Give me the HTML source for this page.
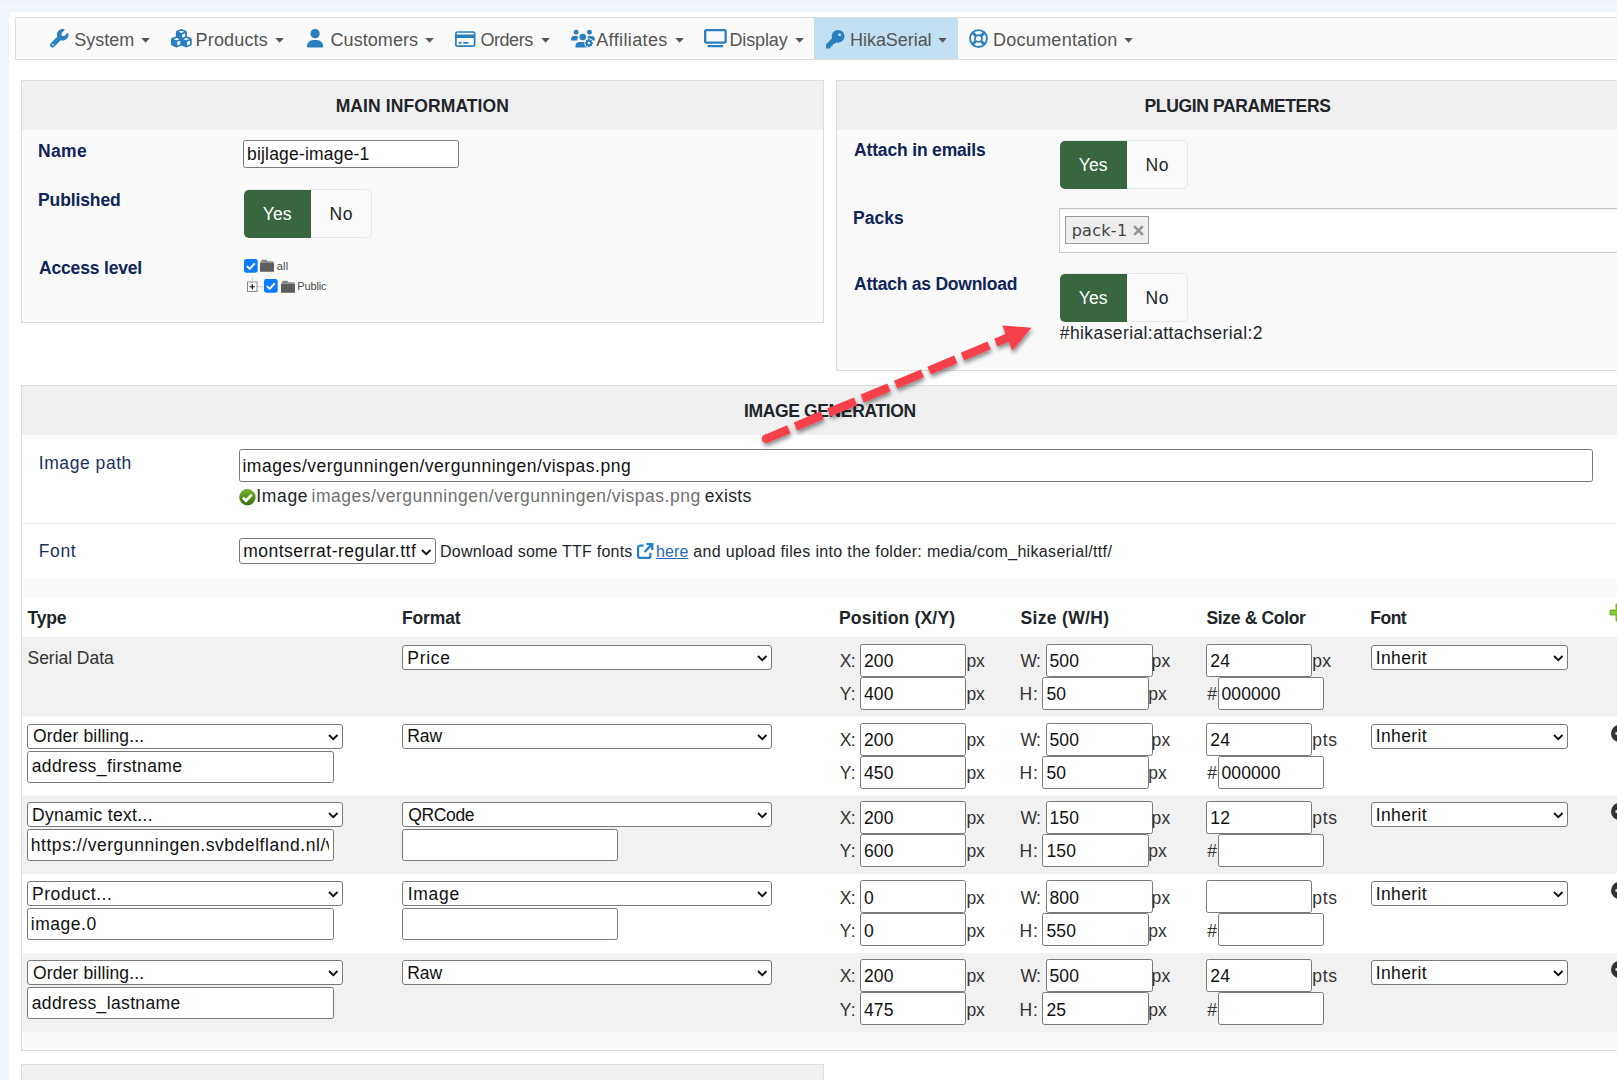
<!DOCTYPE html>
<html lang="en"><head><meta charset="utf-8"><title>HikaSerial - Plugin</title>
<style>
html,body{margin:0;padding:0}
body{width:1617px;height:1080px;overflow:hidden;background:#f0f4fc;font-family:"Liberation Sans",sans-serif;position:relative}
.b{position:absolute;box-sizing:border-box}
.t{position:absolute;white-space:pre;line-height:1;margin:0;padding:0}
.inp{background:#fff;border:1px solid #7a7a7a;border-radius:2.5px}
.sel{background:#fff;border:1px solid #7a7a7a;border-radius:3px}
svg{position:absolute;overflow:visible}
.g{display:contents}
</style></head><body>

<div class="g" aria-label="page">
<div class="b" style="left:0px;top:0px;width:1617px;height:4px;background:#eef2fa"></div>
<div class="b" style="left:9px;top:12px;width:1620px;height:1080px;background:#fff"></div>
</div>
<nav class="g" aria-label="Main menu">
<div class="b" style="left:15px;top:17px;width:1625px;height:43px;background:#fafafa;border:1px solid #ddd"></div>
<div class="b" style="left:814px;top:18px;width:144px;height:41px;background:#c2e0f2"></div>
<svg style="left:141.1px;top:38px" width="9.200" height="4.700" viewBox="0 0 9 5"><path d="M0 0h9L4.500 5z" fill="#555"/></svg>
<svg style="left:274.9px;top:38px" width="9.200" height="4.700" viewBox="0 0 9 5"><path d="M0 0h9L4.500 5z" fill="#555"/></svg>
<svg style="left:425.2px;top:38px" width="9.200" height="4.700" viewBox="0 0 9 5"><path d="M0 0h9L4.500 5z" fill="#555"/></svg>
<svg style="left:540.7px;top:38px" width="9.200" height="4.700" viewBox="0 0 9 5"><path d="M0 0h9L4.500 5z" fill="#555"/></svg>
<svg style="left:674.8px;top:38px" width="9.200" height="4.700" viewBox="0 0 9 5"><path d="M0 0h9L4.500 5z" fill="#555"/></svg>
<svg style="left:794.9px;top:38px" width="9.200" height="4.700" viewBox="0 0 9 5"><path d="M0 0h9L4.500 5z" fill="#555"/></svg>
<svg style="left:937.9px;top:38px" width="9.200" height="4.700" viewBox="0 0 9 5"><path d="M0 0h9L4.500 5z" fill="#555"/></svg>
<svg style="left:1123.7px;top:38px" width="9.200" height="4.700" viewBox="0 0 9 5"><path d="M0 0h9L4.500 5z" fill="#555"/></svg>
<svg style="left:50px;top:29.4px" width="18.5" height="18.5" viewBox="0 0 512 512"><path d="M352 320c88.400 0 160-71.600 160-160c0-15.300-2.200-30.100-6.200-44.200c-3.100-10.800-16.400-13.200-24.300-5.300l-76.800 76.800c-3 3-7.100 4.700-11.300 4.700H336c-8.800 0-16-7.200-16-16V118.600c0-4.200 1.700-8.300 4.700-11.300l76.800-76.800c7.900-7.900 5.400-21.200-5.300-24.300C382.100 2.200 367.300 0 352 0C263.600 0 192 71.600 192 160c0 19.100 3.400 37.500 9.500 54.500L19.900 396.100C7.200 408.800 0 426.100 0 444.100C0 481.600 30.400 512 67.900 512c18 0 35.300-7.200 48-19.900L297.500 310.500c17 6.200 35.400 9.500 54.500 9.500zM80 408a24 24 0 1 1 0 48 24 24 0 1 1 0-48z" fill="#2a7fc0" fill-rule="evenodd"/></svg>
<svg style="left:170.7px;top:29.3px" width="20.8" height="18.5" viewBox="0 0 576 512"><path d="M290.800 48.600l78.400 29.700L288 109.500 206.800 78.300l78.400-29.700c1.800-.7 3.800-.7 5.700 0zM136 92.500V204.700c-1.300 .4-2.600 .8-3.900 1.300l-96 36.400C14.400 250.600 0 271.500 0 294.700V413.900c0 22.200 13.100 42.300 33.500 51.300l96 42.200c14.400 6.300 30.700 6.300 45.100 0L288 457.500l113.500 49.900c14.400 6.300 30.700 6.300 45.100 0l96-42.200c20.300-8.900 33.500-29.100 33.500-51.300V294.700c0-23.300-14.400-44.100-36.100-52.400l-96-36.400c-1.300-.5-2.600-.9-3.900-1.300V92.500c0-23.300-14.400-44.100-36.100-52.400l-96-36.400c-12.800-4.800-26.900-4.800-39.700 0l-96 36.400C150.400 48.400 136 69.300 136 92.500zM392 210.600l-82.400 31.200V152.600L392 121v89.600zM154.800 250.900l78.400 29.700L152 311.700 70.800 280.600l78.400-29.700c1.800-.7 3.800-.7 5.700 0zm18.800 204.400V354.800L256 323.200v95.900l-82.400 36.200zM421.200 250.900c1.800-.7 3.800-.7 5.700 0l78.400 29.700L424 311.700l-81.200-31.100 78.400-29.700zM523.200 421.200l-77.600 34.100V354.800L528 323.200v90.700c0 3.200-1.900 6-4.800 7.300z" fill="#2a7fc0" fill-rule="evenodd"/></svg>
<svg style="left:307.2px;top:29.4px" width="16.2" height="18.5" viewBox="0 0 448 512"><path d="M224 256A128 128 0 1 0 224 0a128 128 0 1 0 0 256zm-45.700 48C79.800 304 0 383.800 0 482.300C0 498.700 13.300 512 29.700 512H418.300c16.400 0 29.700-13.300 29.700-29.700C448 383.800 368.200 304 269.700 304H178.300z" fill="#2a7fc0" /></svg>
<svg style="left:454.8px;top:29.7px" width="20.5" height="18.2" viewBox="0 0 576 512"><path d="M512 80c8.800 0 16 7.200 16 16v32H48V96c0-8.800 7.200-16 16-16H512zm16 144V416c0 8.800-7.200 16-16 16H64c-8.800 0-16-7.200-16-16V224H528zM64 32C28.700 32 0 60.700 0 96V416c0 35.300 28.700 64 64 64H512c35.300 0 64-28.700 64-64V96c0-35.300-28.700-64-64-64H64zm56 304c-13.300 0-24 10.700-24 24s10.700 24 24 24h48c13.300 0 24-10.700 24-24s-10.700-24-24-24H120zm128 0c-13.300 0-24 10.700-24 24s10.700 24 24 24H360c13.300 0 24-10.700 24-24s-10.700-24-24-24H248z" fill="#2a7fc0" fill-rule="evenodd"/></svg>
<svg style="left:570.500px;top:29px" width="22.500" height="19" viewBox="0 0 45 38"><g fill="#2a7fc0">
<circle cx="10.200" cy="6.400" r="4.900"/><circle cx="36.900" cy="6.400" r="4.900"/><circle cx="23.600" cy="16" r="6.600"/>
<path d="M0.200 22.800v-3c0-3.500 2.500-6 6-6h4c2 0 3.800.8 5 2.200-2 1.800-3 4-3 6.800z"/>
<path d="M32.600 16c1.200-1.400 3-2.200 5-2.200h4c3.500 0 6 2.500 6 6v3H35.500c0-2.800-1-5-2.900-6.800z"/>
<path d="M9 36.800v-3.500c0-4 3.200-7.300 7.300-7.300h14.600c4 0 7.300 3.300 7.300 7.300v3.500z"/>
<circle cx="35.800" cy="28.200" r="9.400" fill="#fafafa"/>
<g transform="translate(35.800 28.200)"><circle r="5.800"/><rect x="-1.900" y="-8" width="3.800" height="5" rx=".5" transform="rotate(0)"/><rect x="-1.900" y="-8" width="3.800" height="5" rx=".5" transform="rotate(45)"/><rect x="-1.900" y="-8" width="3.800" height="5" rx=".5" transform="rotate(90)"/><rect x="-1.900" y="-8" width="3.800" height="5" rx=".5" transform="rotate(135)"/><rect x="-1.900" y="-8" width="3.800" height="5" rx=".5" transform="rotate(180)"/><rect x="-1.900" y="-8" width="3.800" height="5" rx=".5" transform="rotate(225)"/><rect x="-1.900" y="-8" width="3.800" height="5" rx=".5" transform="rotate(270)"/><rect x="-1.900" y="-8" width="3.800" height="5" rx=".5" transform="rotate(315)"/><circle r="2.500" fill="#fafafa"/></g>
</g></svg>
<svg style="left:704.3px;top:29.4px" width="22.8" height="18.3" viewBox="0 0 640 512"><path d="M64 64V352H576V64H64zM0 64C0 28.700 28.700 0 64 0H576c35.300 0 64 28.700 64 64V352c0 35.300-28.700 64-64 64H64c-35.300 0-64-28.700-64-64V64zM128 448H512c17.700 0 32 14.300 32 32s-14.300 32-32 32H128c-17.700 0-32-14.300-32-32s14.300-32 32-32z" fill="#2a7fc0" fill-rule="evenodd"/></svg>
<svg style="left:826px;top:29.9px" width="18.5" height="18.5" viewBox="0 0 512 512"><path d="M336 352c97.200 0 176-78.800 176-176S433.200 0 336 0S160 78.800 160 176c0 18.700 2.900 36.800 8.300 53.700L7 391c-4.500 4.500-7 10.600-7 17v80c0 13.300 10.700 24 24 24h80c13.300 0 24-10.700 24-24V448h40c13.300 0 24-10.700 24-24V384h40c6.400 0 12.500-2.500 17-7l33.300-33.300c16.900 5.400 35 8.300 53.700 8.300zM376 96a40 40 0 1 1 0 80 40 40 0 1 1 0-80z" fill="#2a7fc0" fill-rule="evenodd"/></svg>
<svg style="left:968.8px;top:29.200px" width="19" height="19" viewBox="0 0 38 38"><g fill="none" stroke="#2a7fc0">
<circle cx="19" cy="19" r="16.900" stroke-width="3.700"/><circle cx="19" cy="19" r="6.900" stroke-width="3.600"/>
<path d="M7.500 7.500l6.500 6.500M30.500 7.500L24 14M7.500 30.500L14 24M30.500 30.500L24 24" stroke-width="5.600"/></g>
<g fill="none" stroke="#fafafa" stroke-width="0"></g></svg>
<span class="t" style="left:74.30px;top:31px;font-size:18px;font-weight:400;color:#555;letter-spacing:-0.024px;">System</span>
<span class="t" style="left:195.60px;top:31px;font-size:18px;font-weight:400;color:#555;letter-spacing:0.152px;">Products</span>
<span class="t" style="left:330.50px;top:31px;font-size:18px;font-weight:400;color:#555;letter-spacing:0.060px;">Customers</span>
<span class="t" style="left:480.50px;top:31px;font-size:18px;font-weight:400;color:#555;letter-spacing:-0.462px;">Orders</span>
<span class="t" style="left:596.20px;top:31px;font-size:18px;font-weight:400;color:#555;letter-spacing:0.378px;">Affiliates</span>
<span class="t" style="left:729.50px;top:31px;font-size:18px;font-weight:400;color:#555;letter-spacing:-0.136px;">Display</span>
<span class="t" style="left:850.10px;top:31px;font-size:18px;font-weight:400;color:#555;letter-spacing:-0.059px;">HikaSerial</span>
<span class="t" style="left:993.10px;top:31px;font-size:18px;font-weight:400;color:#555;letter-spacing:0.253px;">Documentation</span>
</nav>
<section class="g" aria-label="Main information">
<div class="b" style="left:21px;top:80px;width:803px;height:243px;border:1px solid #ddd;background:#fafafa"></div>
<div class="b" style="left:22px;top:81px;width:801px;height:49px;background:#f0f0f0"></div>
<div class="b inp" style="left:243px;top:140px;width:216px;height:28px;"></div>
<div class="b" style="left:244px;top:189px;width:128px;height:49px;background:#fbfbfb;border:1px solid #e5e8ed;border-radius:5px"></div>
<div class="b" style="left:244px;top:190px;width:67px;height:47.5px;background:#386641;border-radius:5px 0 0 5px"></div>
<svg style="left:243.6px;top:258.5px" width="13.7" height="13.7" viewBox="0 0 14 14"><rect x="0" y="0" width="14" height="14" rx="2.200" fill="#0d7bfd"/><path d="M3 7.300l2.800 2.800L11 4.400" fill="none" stroke="#fff" stroke-width="2"/></svg>
<svg style="left:260.2px;top:259.3px" width="14" height="13" viewBox="0 0 14 13"><path d="M0.500 2.500L2 .8h4.500l1 1.400H13.500v1.500H0.500z" fill="#8a8a8a"/><rect x="0" y="3.800" width="14" height="9" rx=".4" fill="#5e5e5e"/></svg>
<svg style="left:246px;top:274px" width="20" height="20" viewBox="0 0 20 20"><path d="M6.500 3.500v4" stroke="#aaa" stroke-width="1" stroke-dasharray="1 1" fill="none"/><path d="M11.500 12.750h6" stroke="#ccc" stroke-width="1" fill="none"/><rect x="1.500" y="8" width="9.500" height="9.500" fill="#fff" stroke="#888" stroke-width="1"/><path d="M3.800 12.750h5M6.300 10.250v5" stroke="#000" stroke-width="1.200"/></svg>
<svg style="left:264px;top:279.3px" width="13.7" height="13.7" viewBox="0 0 14 14"><rect x="0" y="0" width="14" height="14" rx="2.200" fill="#0d7bfd"/><path d="M3 7.300l2.800 2.800L11 4.400" fill="none" stroke="#fff" stroke-width="2"/></svg>
<svg style="left:281.2px;top:280.2px" width="14" height="13" viewBox="0 0 14 13"><path d="M0.500 2.500L2 .8h4.500l1 1.400H13.500v1.500H0.500z" fill="#8a8a8a"/><rect x="0" y="3.800" width="14" height="9" rx=".4" fill="#5e5e5e"/></svg>
<span class="t" style="left:335.70px;top:98px;font-size:17.5px;font-weight:700;color:#212529;letter-spacing:0.100px;">MAIN INFORMATION</span>
<span class="t" style="left:38.00px;top:143px;font-size:17.5px;font-weight:700;color:#0f2458;letter-spacing:0.356px;">Name</span>
<span class="t" style="left:38.00px;top:192px;font-size:17.5px;font-weight:700;color:#0f2458;letter-spacing:-0.116px;">Published</span>
<span class="t" style="left:39.00px;top:260px;font-size:17.5px;font-weight:700;color:#0f2458;letter-spacing:-0.175px;">Access level</span>
<span class="t" style="left:247.00px;top:146px;font-size:17.5px;font-weight:400;color:#111;letter-spacing:0.192px;">bijlage-image-1</span>
<span class="t" style="left:262.80px;top:206px;font-size:17.5px;font-weight:400;color:#fff;letter-spacing:0.051px;">Yes</span>
<span class="t" style="left:329.38px;top:206px;font-size:17.5px;font-weight:400;color:#212529;letter-spacing:0.700px;">No</span>
<span class="t" style="left:276.80px;top:261px;font-size:11px;font-weight:400;color:#4a4a4a;letter-spacing:0.169px;">all</span>
<span class="t" style="left:297.20px;top:281px;font-size:11px;font-weight:400;color:#4a4a4a;letter-spacing:-0.112px;">Public</span>
</section>
<section class="g" aria-label="Plugin parameters">
<div class="b" style="left:836px;top:80px;width:803px;height:291px;border:1px solid #ddd;background:#fafafa"></div>
<div class="b" style="left:837px;top:81px;width:801px;height:49px;background:#f0f0f0"></div>
<div class="b" style="left:1060px;top:140px;width:128px;height:49px;background:#fbfbfb;border:1px solid #e5e8ed;border-radius:5px"></div>
<div class="b" style="left:1060px;top:141px;width:67px;height:47.5px;background:#386641;border-radius:5px 0 0 5px"></div>
<div class="b" style="left:1060px;top:273px;width:128px;height:49px;background:#fbfbfb;border:1px solid #e5e8ed;border-radius:5px"></div>
<div class="b" style="left:1060px;top:274px;width:67px;height:47.5px;background:#386641;border-radius:5px 0 0 5px"></div>
<div class="b" style="left:1059px;top:208px;width:600px;height:45px;background:#fff;border:1px solid #ccc;border-top-color:#c4c4c4;box-shadow:inset 0 1px 1px rgba(0,0,0,.06)"></div>
<div class="b" style="left:1065px;top:216px;width:83.5px;height:28px;background:#eee;border:1px solid #9c9c9c"></div>
<svg style="left:1132.600px;top:225.300px" width="11" height="11" viewBox="0 0 10 10"><path d="M1 1l8 8M9 1l-8 8" stroke="#959595" stroke-width="2.300" fill="none"/></svg>
<span class="t" style="left:1144.50px;top:98px;font-size:17.5px;font-weight:700;color:#212529;letter-spacing:-0.363px;">PLUGIN PARAMETERS</span>
<span class="t" style="left:854.10px;top:142px;font-size:17.5px;font-weight:700;color:#0f2458;letter-spacing:-0.172px;">Attach in emails</span>
<span class="t" style="left:853.10px;top:210px;font-size:17.5px;font-weight:700;color:#0f2458;letter-spacing:-0.018px;">Packs</span>
<span class="t" style="left:854.10px;top:276px;font-size:17.5px;font-weight:700;color:#0f2458;letter-spacing:-0.232px;">Attach as Download</span>
<span class="t" style="left:1078.80px;top:157px;font-size:17.5px;font-weight:400;color:#fff;letter-spacing:0.051px;">Yes</span>
<span class="t" style="left:1145.38px;top:157px;font-size:17.5px;font-weight:400;color:#212529;letter-spacing:0.700px;">No</span>
<span class="t" style="left:1078.80px;top:290px;font-size:17.5px;font-weight:400;color:#fff;letter-spacing:0.051px;">Yes</span>
<span class="t" style="left:1145.38px;top:290px;font-size:17.5px;font-weight:400;color:#212529;letter-spacing:0.700px;">No</span>
<span class="t" style="left:1071.70px;top:223px;font-size:16px;font-weight:400;color:#444;font-family:'DejaVu Sans', 'Liberation Sans', sans-serif;letter-spacing:0.281px;">pack-1</span>
<span class="t" style="left:1059.80px;top:325px;font-size:17.5px;font-weight:400;color:#212529;letter-spacing:0.401px;">#hikaserial:attachserial:2</span>
</section>
<section class="g" aria-label="Image generation">
<div class="b" style="left:21px;top:385px;width:1620px;height:666px;border:1px solid #ddd;background:#fafafa"></div>
<div class="b" style="left:22px;top:386px;width:1618px;height:49px;background:#f0f0f0"></div>
<div class="b" style="left:22px;top:435px;width:1618px;height:143px;background:#fff"></div>
<div class="b" style="left:22px;top:523px;width:1618px;height:1px;background:#e9ecef"></div>
<div class="b inp" style="left:238.5px;top:449px;width:1354.5px;height:32.5px;"></div>
<svg style="left:239px;top:489px" width="16.800" height="16.400" viewBox="0 0 16 16"><defs><linearGradient id="cg" x1="0" y1="0" x2="0" y2="1"><stop offset="0" stop-color="#74b62c"/><stop offset="1" stop-color="#356f10"/></linearGradient></defs><circle cx="8" cy="8" r="8" fill="url(#cg)"/><path d="M3.600 8.600l3 2.900 5.600-6" fill="none" stroke="#fff" stroke-width="2.600"/></svg>
<div class="b sel" style="left:238.5px;top:538px;width:197px;height:26px"><svg style="right:3.500px;top:9.7px" width="10.500" height="6.500" viewBox="0 0 10.500 6.500"><path d="M1 1l4.250 4.250L9.500 1" fill="none" stroke="#111" stroke-width="1.900"/></svg></div>
<svg style="left:637.100px;top:543.300px" width="16.500" height="16" viewBox="0 0 16 15.500"><path d="M6.500 2.500H3.200C2 2.500 1 3.500 1 4.700v7.600c0 1.200 1 2.200 2.200 2.200h7.600c1.200 0 2.200-1 2.200-2.200V9.500" fill="none" stroke="#2a7fc8" stroke-width="2.200"/><path d="M9.200 1.100h5.600v5.600M14.500 1.400L7.200 8.700" fill="none" stroke="#2a7fc8" stroke-width="2.300"/></svg>
<div class="b" style="left:22px;top:597px;width:1618px;height:40px;background:#fff"></div>
<svg style="left:1610px;top:603.5px" width="17" height="17" viewBox="0 0 17 17"><path d="M6 0h5v6h6v5h-6v6H6v-6H0V6h6z" fill="#86c93a" stroke="#5a9e22" stroke-width="0.8"/></svg>
<div class="b" style="left:22px;top:637px;width:1618px;height:80px;background:#f1f1f1"></div>
<div class="b sel" style="left:402px;top:645px;width:370px;height:25px"><svg style="right:3.500px;top:9.2px" width="10.500" height="6.500" viewBox="0 0 10.500 6.500"><path d="M1 1l4.250 4.250L9.500 1" fill="none" stroke="#111" stroke-width="1.900"/></svg></div>
<div class="b inp" style="left:859.5px;top:644px;width:106.5px;height:33px"></div>
<div class="b inp" style="left:859.5px;top:677px;width:106.5px;height:33px"></div>
<div class="b inp" style="left:1045.5px;top:644px;width:107px;height:33px"></div>
<div class="b inp" style="left:1042px;top:677px;width:106.5px;height:33px"></div>
<div class="b inp" style="left:1206px;top:644px;width:106px;height:33px"></div>
<div class="b inp" style="left:1217.5px;top:677px;width:106.5px;height:33px"></div>
<div class="b sel" style="left:1370.5px;top:645px;width:197.5px;height:25px"><svg style="right:3.500px;top:9.2px" width="10.500" height="6.500" viewBox="0 0 10.500 6.500"><path d="M1 1l4.250 4.250L9.500 1" fill="none" stroke="#111" stroke-width="1.900"/></svg></div>
<div class="b" style="left:22px;top:717px;width:1618px;height:78px;background:#fff"></div>
<div class="b sel" style="left:27px;top:724px;width:316px;height:25px"><svg style="right:3.500px;top:9.2px" width="10.500" height="6.500" viewBox="0 0 10.500 6.500"><path d="M1 1l4.250 4.250L9.500 1" fill="none" stroke="#111" stroke-width="1.900"/></svg></div>
<div class="b inp" style="left:27px;top:751px;width:307px;height:32px"></div>
<div class="b sel" style="left:402px;top:724px;width:370px;height:25px"><svg style="right:3.500px;top:9.2px" width="10.500" height="6.500" viewBox="0 0 10.500 6.500"><path d="M1 1l4.250 4.250L9.500 1" fill="none" stroke="#111" stroke-width="1.900"/></svg></div>
<div class="b inp" style="left:859.5px;top:723px;width:106.5px;height:33px"></div>
<div class="b inp" style="left:859.5px;top:756px;width:106.5px;height:33px"></div>
<div class="b inp" style="left:1045.5px;top:723px;width:107px;height:33px"></div>
<div class="b inp" style="left:1042px;top:756px;width:106.5px;height:33px"></div>
<div class="b inp" style="left:1206px;top:723px;width:106px;height:33px"></div>
<div class="b inp" style="left:1217.5px;top:756px;width:106.5px;height:33px"></div>
<div class="b sel" style="left:1370.5px;top:724px;width:197.5px;height:25px"><svg style="right:3.500px;top:9.2px" width="10.500" height="6.500" viewBox="0 0 10.500 6.500"><path d="M1 1l4.250 4.250L9.500 1" fill="none" stroke="#111" stroke-width="1.900"/></svg></div>
<svg style="left:1611px;top:725.0px" width="17" height="17" viewBox="0 0 17 17"><circle cx="8.500" cy="8.500" r="8.500" fill="#333"/><path d="M4.500 8.500h8" stroke="#fff" stroke-width="2.600"/></svg>
<div class="b" style="left:22px;top:795px;width:1618px;height:79px;background:#f1f1f1"></div>
<div class="b sel" style="left:27px;top:802px;width:316px;height:25px"><svg style="right:3.500px;top:9.2px" width="10.500" height="6.500" viewBox="0 0 10.500 6.500"><path d="M1 1l4.250 4.250L9.500 1" fill="none" stroke="#111" stroke-width="1.900"/></svg></div>
<div class="b inp" style="left:27px;top:829px;width:307px;height:32px"></div>
<div class="b sel" style="left:402px;top:802px;width:370px;height:25px"><svg style="right:3.500px;top:9.2px" width="10.500" height="6.500" viewBox="0 0 10.500 6.500"><path d="M1 1l4.250 4.250L9.500 1" fill="none" stroke="#111" stroke-width="1.900"/></svg></div>
<div class="b inp" style="left:402px;top:829px;width:216px;height:32px"></div>
<div class="b inp" style="left:859.5px;top:801px;width:106.5px;height:33px"></div>
<div class="b inp" style="left:859.5px;top:834px;width:106.5px;height:33px"></div>
<div class="b inp" style="left:1045.5px;top:801px;width:107px;height:33px"></div>
<div class="b inp" style="left:1042px;top:834px;width:106.5px;height:33px"></div>
<div class="b inp" style="left:1206px;top:801px;width:106px;height:33px"></div>
<div class="b inp" style="left:1217.5px;top:834px;width:106.5px;height:33px"></div>
<div class="b sel" style="left:1370.5px;top:802px;width:197.5px;height:25px"><svg style="right:3.500px;top:9.2px" width="10.500" height="6.500" viewBox="0 0 10.500 6.500"><path d="M1 1l4.250 4.250L9.500 1" fill="none" stroke="#111" stroke-width="1.900"/></svg></div>
<svg style="left:1611px;top:803.0px" width="17" height="17" viewBox="0 0 17 17"><circle cx="8.500" cy="8.500" r="8.500" fill="#333"/><path d="M4.500 8.500h8" stroke="#fff" stroke-width="2.600"/></svg>
<div class="b" style="left:22px;top:874px;width:1618px;height:79px;background:#fff"></div>
<div class="b sel" style="left:27px;top:881px;width:316px;height:25px"><svg style="right:3.500px;top:9.2px" width="10.500" height="6.500" viewBox="0 0 10.500 6.500"><path d="M1 1l4.250 4.250L9.500 1" fill="none" stroke="#111" stroke-width="1.900"/></svg></div>
<div class="b inp" style="left:27px;top:908px;width:307px;height:32px"></div>
<div class="b sel" style="left:402px;top:881px;width:370px;height:25px"><svg style="right:3.500px;top:9.2px" width="10.500" height="6.500" viewBox="0 0 10.500 6.500"><path d="M1 1l4.250 4.250L9.500 1" fill="none" stroke="#111" stroke-width="1.900"/></svg></div>
<div class="b inp" style="left:402px;top:908px;width:216px;height:32px"></div>
<div class="b inp" style="left:859.5px;top:880px;width:106.5px;height:33px"></div>
<div class="b inp" style="left:859.5px;top:913px;width:106.5px;height:33px"></div>
<div class="b inp" style="left:1045.5px;top:880px;width:107px;height:33px"></div>
<div class="b inp" style="left:1042px;top:913px;width:106.5px;height:33px"></div>
<div class="b inp" style="left:1206px;top:880px;width:106px;height:33px"></div>
<div class="b inp" style="left:1217.5px;top:913px;width:106.5px;height:33px"></div>
<div class="b sel" style="left:1370.5px;top:881px;width:197.5px;height:25px"><svg style="right:3.500px;top:9.2px" width="10.500" height="6.500" viewBox="0 0 10.500 6.500"><path d="M1 1l4.250 4.250L9.500 1" fill="none" stroke="#111" stroke-width="1.900"/></svg></div>
<svg style="left:1611px;top:882.0px" width="17" height="17" viewBox="0 0 17 17"><circle cx="8.500" cy="8.500" r="8.500" fill="#333"/><path d="M4.500 8.500h8" stroke="#fff" stroke-width="2.600"/></svg>
<div class="b" style="left:22px;top:953px;width:1618px;height:79px;background:#f1f1f1"></div>
<div class="b sel" style="left:27px;top:960px;width:316px;height:25px"><svg style="right:3.500px;top:9.2px" width="10.500" height="6.500" viewBox="0 0 10.500 6.500"><path d="M1 1l4.250 4.250L9.500 1" fill="none" stroke="#111" stroke-width="1.900"/></svg></div>
<div class="b inp" style="left:27px;top:987px;width:307px;height:32px"></div>
<div class="b sel" style="left:402px;top:960px;width:370px;height:25px"><svg style="right:3.500px;top:9.2px" width="10.500" height="6.500" viewBox="0 0 10.500 6.500"><path d="M1 1l4.250 4.250L9.500 1" fill="none" stroke="#111" stroke-width="1.900"/></svg></div>
<div class="b inp" style="left:859.5px;top:959px;width:106.5px;height:33px"></div>
<div class="b inp" style="left:859.5px;top:992px;width:106.5px;height:33px"></div>
<div class="b inp" style="left:1045.5px;top:959px;width:107px;height:33px"></div>
<div class="b inp" style="left:1042px;top:992px;width:106.5px;height:33px"></div>
<div class="b inp" style="left:1206px;top:959px;width:106px;height:33px"></div>
<div class="b inp" style="left:1217.5px;top:992px;width:106.5px;height:33px"></div>
<div class="b sel" style="left:1370.5px;top:960px;width:197.5px;height:25px"><svg style="right:3.500px;top:9.2px" width="10.500" height="6.500" viewBox="0 0 10.500 6.500"><path d="M1 1l4.250 4.250L9.500 1" fill="none" stroke="#111" stroke-width="1.900"/></svg></div>
<svg style="left:1611px;top:961.0px" width="17" height="17" viewBox="0 0 17 17"><circle cx="8.500" cy="8.500" r="8.500" fill="#333"/><path d="M4.500 8.500h8" stroke="#fff" stroke-width="2.600"/></svg>
<span class="t" style="left:744.00px;top:403px;font-size:17.5px;font-weight:700;color:#212529;letter-spacing:-0.364px;">IMAGE GENERATION</span>
<span class="t" style="left:38.80px;top:455px;font-size:17.5px;font-weight:400;color:#1c2f5e;letter-spacing:0.553px;">Image path</span>
<span class="t" style="left:38.80px;top:543px;font-size:17.5px;font-weight:400;color:#1c2f5e;letter-spacing:0.582px;">Font</span>
<span class="t" style="left:242.40px;top:458px;font-size:17.5px;font-weight:400;color:#111;letter-spacing:0.513px;">images/vergunningen/vergunningen/vispas.png</span>
<span class="t" style="left:256.15px;top:488px;font-size:17.5px;font-weight:400;color:#212529;letter-spacing:0.700px;">Image</span>
<span class="t" style="left:311.60px;top:488px;font-size:17.5px;font-weight:400;color:#707070;letter-spacing:0.518px;">images/vergunningen/vergunningen/vispas.png</span>
<span class="t" style="left:704.80px;top:488px;font-size:17.5px;font-weight:400;color:#212529;letter-spacing:0.323px;">exists</span>
<span class="t" style="left:243.20px;top:543px;font-size:17.5px;font-weight:400;color:#111;letter-spacing:0.483px;">montserrat-regular.ttf</span>
<span class="t" style="left:440.10px;top:544px;font-size:16px;font-weight:400;color:#212529;letter-spacing:0.222px;">Download some TTF fonts</span>
<span class="t" style="left:655.90px;top:544px;font-size:16px;font-weight:400;color:#2a69b8;letter-spacing:0.125px;text-decoration:underline">here</span>
<span class="t" style="left:693.30px;top:544px;font-size:16px;font-weight:400;color:#212529;letter-spacing:0.331px;">and upload files into the folder: media/com_hikaserial/ttf/</span>
<span class="t" style="left:27.50px;top:610px;font-size:17.5px;font-weight:700;color:#212529;letter-spacing:-0.188px;">Type</span>
<span class="t" style="left:402.00px;top:610px;font-size:17.5px;font-weight:700;color:#212529;letter-spacing:-0.147px;">Format</span>
<span class="t" style="left:839.00px;top:610px;font-size:17.5px;font-weight:700;color:#212529;letter-spacing:0.179px;">Position (X/Y)</span>
<span class="t" style="left:1020.50px;top:610px;font-size:17.5px;font-weight:700;color:#212529;letter-spacing:0.336px;">Size (W/H)</span>
<span class="t" style="left:1206.50px;top:610px;font-size:17.5px;font-weight:700;color:#212529;letter-spacing:-0.342px;">Size &amp; Color</span>
<span class="t" style="left:1370.30px;top:610px;font-size:17.5px;font-weight:700;color:#212529;letter-spacing:-0.523px;">Font</span>
<span class="t" style="left:27.50px;top:650px;font-size:17.5px;font-weight:400;color:#333;letter-spacing:-0.034px;">Serial Data</span>
<span class="t" style="left:407.28px;top:650px;font-size:17.5px;font-weight:400;color:#111;letter-spacing:0.700px;">Price</span>
<span class="t" style="left:839.79px;top:653px;font-size:17.5px;font-weight:400;color:#333;letter-spacing:-0.700px;">X:</span>
<span class="t" style="left:839.80px;top:686px;font-size:17.5px;font-weight:400;color:#333;letter-spacing:0.243px;">Y:</span>
<span class="t" style="left:864.00px;top:653px;font-size:17.5px;font-weight:400;color:#111;letter-spacing:0.097px;">200</span>
<span class="t" style="left:864.00px;top:686px;font-size:17.5px;font-weight:400;color:#111;letter-spacing:0.097px;">400</span>
<span class="t" style="left:966.50px;top:653px;font-size:17.5px;font-weight:400;color:#333;letter-spacing:-0.233px;">px</span>
<span class="t" style="left:966.50px;top:686px;font-size:17.5px;font-weight:400;color:#333;letter-spacing:-0.233px;">px</span>
<span class="t" style="left:1020.50px;top:653px;font-size:17.5px;font-weight:400;color:#333;letter-spacing:-0.700px;">W:</span>
<span class="t" style="left:1019.58px;top:686px;font-size:17.5px;font-weight:400;color:#333;letter-spacing:0.700px;">H:</span>
<span class="t" style="left:1049.50px;top:653px;font-size:17.5px;font-weight:400;color:#111;letter-spacing:0.097px;">500</span>
<span class="t" style="left:1046.50px;top:686px;font-size:17.5px;font-weight:400;color:#111;letter-spacing:0.097px;">50</span>
<span class="t" style="left:1151.50px;top:653px;font-size:17.5px;font-weight:400;color:#333;letter-spacing:0.267px;">px</span>
<span class="t" style="left:1148.25px;top:686px;font-size:17.5px;font-weight:400;color:#333;letter-spacing:0.017px;">px</span>
<span class="t" style="left:1210.30px;top:653px;font-size:17.5px;font-weight:400;color:#111;letter-spacing:0.097px;">24</span>
<span class="t" style="left:1221.50px;top:686px;font-size:17.5px;font-weight:400;color:#111;letter-spacing:0.097px;">000000</span>
<span class="t" style="left:1312.20px;top:653px;font-size:17.5px;font-weight:400;color:#333;letter-spacing:0.367px;">px</span>
<span class="t" style="left:1207.30px;top:686px;font-size:17.5px;font-weight:400;color:#333;">#</span>
<span class="t" style="left:1375.70px;top:650px;font-size:17.5px;font-weight:400;color:#111;letter-spacing:0.387px;">Inherit</span>
<span class="t" style="left:33.00px;top:728px;font-size:17.5px;font-weight:400;color:#111;letter-spacing:0.145px;">Order billing...</span>
<span class="t" style="left:31.75px;top:758px;font-size:17.5px;font-weight:400;color:#111;letter-spacing:0.392px;">address_firstname</span>
<span class="t" style="left:407.25px;top:728px;font-size:17.5px;font-weight:400;color:#111;letter-spacing:-0.060px;">Raw</span>
<span class="t" style="left:839.79px;top:732px;font-size:17.5px;font-weight:400;color:#333;letter-spacing:-0.700px;">X:</span>
<span class="t" style="left:839.80px;top:765px;font-size:17.5px;font-weight:400;color:#333;letter-spacing:0.243px;">Y:</span>
<span class="t" style="left:864.00px;top:732px;font-size:17.5px;font-weight:400;color:#111;letter-spacing:0.097px;">200</span>
<span class="t" style="left:864.00px;top:765px;font-size:17.5px;font-weight:400;color:#111;letter-spacing:0.097px;">450</span>
<span class="t" style="left:966.50px;top:732px;font-size:17.5px;font-weight:400;color:#333;letter-spacing:-0.233px;">px</span>
<span class="t" style="left:966.50px;top:765px;font-size:17.5px;font-weight:400;color:#333;letter-spacing:-0.233px;">px</span>
<span class="t" style="left:1020.50px;top:732px;font-size:17.5px;font-weight:400;color:#333;letter-spacing:-0.700px;">W:</span>
<span class="t" style="left:1019.58px;top:765px;font-size:17.5px;font-weight:400;color:#333;letter-spacing:0.700px;">H:</span>
<span class="t" style="left:1049.50px;top:732px;font-size:17.5px;font-weight:400;color:#111;letter-spacing:0.097px;">500</span>
<span class="t" style="left:1046.50px;top:765px;font-size:17.5px;font-weight:400;color:#111;letter-spacing:0.097px;">50</span>
<span class="t" style="left:1151.50px;top:732px;font-size:17.5px;font-weight:400;color:#333;letter-spacing:0.267px;">px</span>
<span class="t" style="left:1148.25px;top:765px;font-size:17.5px;font-weight:400;color:#333;letter-spacing:0.017px;">px</span>
<span class="t" style="left:1210.30px;top:732px;font-size:17.5px;font-weight:400;color:#111;letter-spacing:0.097px;">24</span>
<span class="t" style="left:1221.50px;top:765px;font-size:17.5px;font-weight:400;color:#111;letter-spacing:0.097px;">000000</span>
<span class="t" style="left:1312.35px;top:732px;font-size:17.5px;font-weight:400;color:#333;letter-spacing:0.700px;">pts</span>
<span class="t" style="left:1207.30px;top:765px;font-size:17.5px;font-weight:400;color:#333;">#</span>
<span class="t" style="left:1375.70px;top:728px;font-size:17.5px;font-weight:400;color:#111;letter-spacing:0.387px;">Inherit</span>
<span class="t" style="left:32.00px;top:807px;font-size:17.5px;font-weight:400;color:#111;letter-spacing:0.349px;">Dynamic text...</span>
<span class="t" style="left:30.75px;top:837px;font-size:17.5px;font-weight:400;color:#111;letter-spacing:0.548px;width:298.5px;overflow:hidden">https://vergunningen.svbdelfland.nl/vispas</span>
<span class="t" style="left:408.25px;top:807px;font-size:17.5px;font-weight:400;color:#111;letter-spacing:-0.371px;">QRCode</span>
<span class="t" style="left:839.79px;top:810px;font-size:17.5px;font-weight:400;color:#333;letter-spacing:-0.700px;">X:</span>
<span class="t" style="left:839.80px;top:843px;font-size:17.5px;font-weight:400;color:#333;letter-spacing:0.243px;">Y:</span>
<span class="t" style="left:864.00px;top:810px;font-size:17.5px;font-weight:400;color:#111;letter-spacing:0.097px;">200</span>
<span class="t" style="left:864.00px;top:843px;font-size:17.5px;font-weight:400;color:#111;letter-spacing:0.097px;">600</span>
<span class="t" style="left:966.50px;top:810px;font-size:17.5px;font-weight:400;color:#333;letter-spacing:-0.233px;">px</span>
<span class="t" style="left:966.50px;top:843px;font-size:17.5px;font-weight:400;color:#333;letter-spacing:-0.233px;">px</span>
<span class="t" style="left:1020.50px;top:810px;font-size:17.5px;font-weight:400;color:#333;letter-spacing:-0.700px;">W:</span>
<span class="t" style="left:1019.58px;top:843px;font-size:17.5px;font-weight:400;color:#333;letter-spacing:0.700px;">H:</span>
<span class="t" style="left:1049.50px;top:810px;font-size:17.5px;font-weight:400;color:#111;letter-spacing:0.097px;">150</span>
<span class="t" style="left:1046.50px;top:843px;font-size:17.5px;font-weight:400;color:#111;letter-spacing:0.097px;">150</span>
<span class="t" style="left:1151.50px;top:810px;font-size:17.5px;font-weight:400;color:#333;letter-spacing:0.267px;">px</span>
<span class="t" style="left:1148.25px;top:843px;font-size:17.5px;font-weight:400;color:#333;letter-spacing:0.017px;">px</span>
<span class="t" style="left:1210.30px;top:810px;font-size:17.5px;font-weight:400;color:#111;letter-spacing:0.097px;">12</span>
<span class="t" style="left:1312.35px;top:810px;font-size:17.5px;font-weight:400;color:#333;letter-spacing:0.700px;">pts</span>
<span class="t" style="left:1207.30px;top:843px;font-size:17.5px;font-weight:400;color:#333;">#</span>
<span class="t" style="left:1375.70px;top:807px;font-size:17.5px;font-weight:400;color:#111;letter-spacing:0.387px;">Inherit</span>
<span class="t" style="left:32.00px;top:886px;font-size:17.5px;font-weight:400;color:#111;letter-spacing:0.552px;">Product...</span>
<span class="t" style="left:30.75px;top:916px;font-size:17.5px;font-weight:400;color:#111;letter-spacing:0.537px;">image.0</span>
<span class="t" style="left:407.77px;top:886px;font-size:17.5px;font-weight:400;color:#111;letter-spacing:0.700px;">Image</span>
<span class="t" style="left:839.79px;top:890px;font-size:17.5px;font-weight:400;color:#333;letter-spacing:-0.700px;">X:</span>
<span class="t" style="left:839.80px;top:923px;font-size:17.5px;font-weight:400;color:#333;letter-spacing:0.243px;">Y:</span>
<span class="t" style="left:864.00px;top:890px;font-size:17.5px;font-weight:400;color:#111;letter-spacing:0.097px;">0</span>
<span class="t" style="left:864.00px;top:923px;font-size:17.5px;font-weight:400;color:#111;letter-spacing:0.097px;">0</span>
<span class="t" style="left:966.50px;top:890px;font-size:17.5px;font-weight:400;color:#333;letter-spacing:-0.233px;">px</span>
<span class="t" style="left:966.50px;top:923px;font-size:17.5px;font-weight:400;color:#333;letter-spacing:-0.233px;">px</span>
<span class="t" style="left:1020.50px;top:890px;font-size:17.5px;font-weight:400;color:#333;letter-spacing:-0.700px;">W:</span>
<span class="t" style="left:1019.58px;top:923px;font-size:17.5px;font-weight:400;color:#333;letter-spacing:0.700px;">H:</span>
<span class="t" style="left:1049.50px;top:890px;font-size:17.5px;font-weight:400;color:#111;letter-spacing:0.097px;">800</span>
<span class="t" style="left:1046.50px;top:923px;font-size:17.5px;font-weight:400;color:#111;letter-spacing:0.097px;">550</span>
<span class="t" style="left:1151.50px;top:890px;font-size:17.5px;font-weight:400;color:#333;letter-spacing:0.267px;">px</span>
<span class="t" style="left:1148.25px;top:923px;font-size:17.5px;font-weight:400;color:#333;letter-spacing:0.017px;">px</span>
<span class="t" style="left:1312.35px;top:890px;font-size:17.5px;font-weight:400;color:#333;letter-spacing:0.700px;">pts</span>
<span class="t" style="left:1207.30px;top:923px;font-size:17.5px;font-weight:400;color:#333;">#</span>
<span class="t" style="left:1375.70px;top:886px;font-size:17.5px;font-weight:400;color:#111;letter-spacing:0.387px;">Inherit</span>
<span class="t" style="left:33.00px;top:965px;font-size:17.5px;font-weight:400;color:#111;letter-spacing:0.145px;">Order billing...</span>
<span class="t" style="left:31.75px;top:995px;font-size:17.5px;font-weight:400;color:#111;letter-spacing:0.366px;">address_lastname</span>
<span class="t" style="left:407.25px;top:965px;font-size:17.5px;font-weight:400;color:#111;letter-spacing:-0.060px;">Raw</span>
<span class="t" style="left:839.79px;top:968px;font-size:17.5px;font-weight:400;color:#333;letter-spacing:-0.700px;">X:</span>
<span class="t" style="left:839.80px;top:1002px;font-size:17.5px;font-weight:400;color:#333;letter-spacing:0.243px;">Y:</span>
<span class="t" style="left:864.00px;top:968px;font-size:17.5px;font-weight:400;color:#111;letter-spacing:0.097px;">200</span>
<span class="t" style="left:864.00px;top:1002px;font-size:17.5px;font-weight:400;color:#111;letter-spacing:0.097px;">475</span>
<span class="t" style="left:966.50px;top:968px;font-size:17.5px;font-weight:400;color:#333;letter-spacing:-0.233px;">px</span>
<span class="t" style="left:966.50px;top:1002px;font-size:17.5px;font-weight:400;color:#333;letter-spacing:-0.233px;">px</span>
<span class="t" style="left:1020.50px;top:968px;font-size:17.5px;font-weight:400;color:#333;letter-spacing:-0.700px;">W:</span>
<span class="t" style="left:1019.58px;top:1002px;font-size:17.5px;font-weight:400;color:#333;letter-spacing:0.700px;">H:</span>
<span class="t" style="left:1049.50px;top:968px;font-size:17.5px;font-weight:400;color:#111;letter-spacing:0.097px;">500</span>
<span class="t" style="left:1046.50px;top:1002px;font-size:17.5px;font-weight:400;color:#111;letter-spacing:0.097px;">25</span>
<span class="t" style="left:1151.50px;top:968px;font-size:17.5px;font-weight:400;color:#333;letter-spacing:0.267px;">px</span>
<span class="t" style="left:1148.25px;top:1002px;font-size:17.5px;font-weight:400;color:#333;letter-spacing:0.017px;">px</span>
<span class="t" style="left:1210.30px;top:968px;font-size:17.5px;font-weight:400;color:#111;letter-spacing:0.097px;">24</span>
<span class="t" style="left:1312.35px;top:968px;font-size:17.5px;font-weight:400;color:#333;letter-spacing:0.700px;">pts</span>
<span class="t" style="left:1207.30px;top:1002px;font-size:17.5px;font-weight:400;color:#333;">#</span>
<span class="t" style="left:1375.70px;top:965px;font-size:17.5px;font-weight:400;color:#111;letter-spacing:0.387px;">Inherit</span>
</section>
<section class="g" aria-label="Next panel">
<div class="b" style="left:21px;top:1064px;width:803px;height:60px;border:1px solid #ddd;background:#f0f0f0"></div>
</section>
<div class="g" aria-label="Annotation arrow">
<svg style="left:0;top:0;z-index:5" width="1617" height="1080" viewBox="0 0 1617 1080">
<defs><filter id="sh" x="-5%" y="-10%" width="110%" height="130%"><feGaussianBlur in="SourceAlpha" stdDeviation="2"/><feOffset dx="0.500" dy="3"/><feComponentTransfer><feFuncA type="linear" slope="0.450"/></feComponentTransfer><feMerge><feMergeNode/><feMergeNode in="SourceGraphic"/></feMerge></filter></defs>
<g filter="url(#sh)"><path d="M766 438.800L1010 336.700" stroke="#f6414b" stroke-width="8.500" stroke-dasharray="29 7.200" stroke-dashoffset="4.300" stroke-linecap="butt" fill="none"/>
<circle cx="766" cy="438.800" r="4.250" fill="#f6414b"/>
<path d="M1031.500 327.700L1002.300 325.500L1012.200 350.700z" fill="#f6414b"/></g></svg>
</div>

</body></html>
